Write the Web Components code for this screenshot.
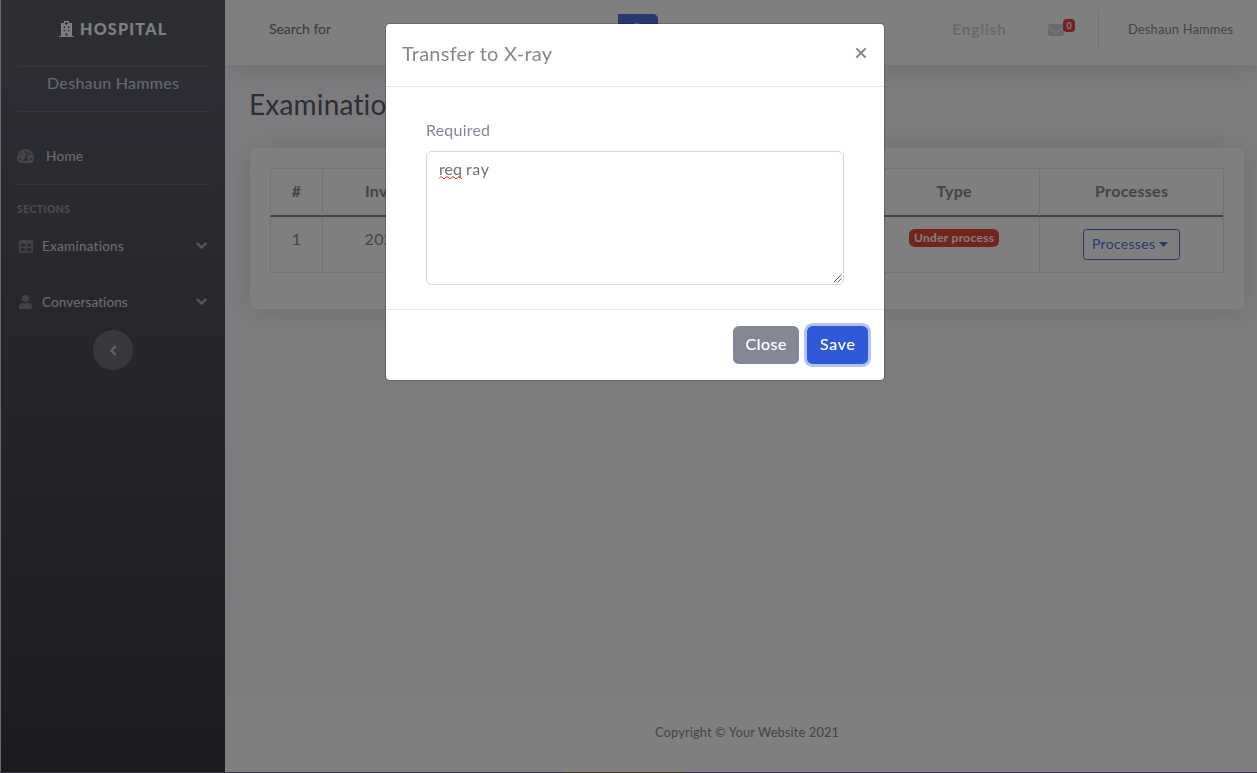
<!DOCTYPE html>
<html lang="en">
<head>
<meta charset="utf-8">
<title>Hospital - Examinations</title>
<style>
  html, body { margin: 0; height: 100%; overflow: hidden; }
  body { font-family: Lato, "Liberation Sans", sans-serif; font-size: 16px; line-height: 24px; color: #858796; background: #f8f9fc; }
</style>
</head>
<body>
<app-shell>
  <side-bar slot="side"></side-bar>
  <top-bar></top-bar>
  <exam-page></exam-page>
  <page-footer></page-footer>
</app-shell>
<modal-backdrop>
  <transfer-modal heading="Transfer to X-ray"></transfer-modal>
</modal-backdrop>
<script>
const ICONS = {
  hospital: ['0 0 15 16', '<path fill-rule="evenodd" d="M5 0h5v2h3v13h2v1H0v-1h2V2h3zM7 1v1H6v1h1v1h1V3h1V2H8V1zM4.500 5.500v1.500h1.700V5.500zM8.800 5.500v1.500h1.700V5.500zM4.500 8.700v1.500h1.700V8.700zM8.800 8.700v1.500h1.700V8.700zM6.700 12v3h1.600v-3z"/>'],
  gauge: ['0 32 576 448', '<path d="M288 32C128.940 32 0 160.940 0 320c0 52.800 14.250 102.260 39.060 144.800 5.610 9.620 16.300 15.200 27.440 15.200h443c11.140 0 21.830-5.580 27.440-15.200C561.750 422.260 576 372.800 576 320c0-159.060-128.940-288-288-288zm0 64c14.710 0 26.580 10.130 30.320 23.650-1.110 2.260-2.640 4.230-3.450 6.670l-9.220 27.670c-5.130 3.490-10.970 6.010-17.640 6.010-17.670 0-32-14.330-32-32S270.330 96 288 96zM96 384c-17.670 0-32-14.330-32-32s14.330-32 32-32 32 14.330 32 32-14.330 32-32 32zm48-160c-17.670 0-32-14.330-32-32s14.330-32 32-32 32 14.330 32 32-14.330 32-32 32zm246.770-72.410l-61.330 184C343.130 347.330 352 364.540 352 384c0 11.720-3.380 22.550-8.880 32H232.880c-5.500-9.450-8.880-20.280-8.880-32 0-33.940 26.500-61.430 59.900-63.590l61.340-184.010c4.170-12.560 17.730-19.450 30.360-15.170 12.570 4.190 19.350 17.790 15.170 30.360zm14.660 57.200l15.520-46.550c3.470-1.290 7.130-2.230 11.050-2.230 17.670 0 32 14.330 32 32s-14.330 32-32 32c-11.380-.010-20.890-6.280-26.570-15.220zM480 384c-17.670 0-32-14.330-32-32s14.330-32 32-32 32 14.330 32 32-14.330 32-32 32z"/>'],
  table: ['0 32 512 448', '<path d="M464 32H48C21.490 32 0 53.490 0 80v352c0 26.510 21.490 48 48 48h416c26.510 0 48-21.490 48-48V80c0-26.510-21.490-48-48-48zM224 416H64v-96h160v96zm0-160H64v-96h160v96zm224 160H288v-96h160v96zm0-160H288v-96h160v96z"/>'],
  user: ['0 0 448 512', '<path d="M224 256c70.700 0 128-57.300 128-128S294.700 0 224 0 96 57.300 96 128s57.300 128 128 128zm89.600 32h-16.700c-22.200 10.200-46.900 16-72.900 16s-50.600-5.800-72.900-16h-16.700C60.200 288 0 348.200 0 422.400V464c0 26.500 21.500 48 48 48h352c26.500 0 48-21.500 48-48v-41.600c0-74.200-60.200-134.400-134.400-134.400z"/>'],
  envelope: ['0 64 512 384', '<path d="M502.300 190.800c3.900-3.100 9.700-.2 9.700 4.700V400c0 26.500-21.500 48-48 48H48c-26.500 0-48-21.500-48-48V195.600c0-5 5.700-7.800 9.700-4.700 22.400 17.400 52.100 39.500 154.100 113.600 21.100 15.400 56.700 47.800 92.200 47.600 35.700.3 72-32.800 92.300-47.600 102-74.100 131.600-96.300 154-113.700zM256 320c23.200.4 56.600-29.200 73.400-41.400 132.700-96.300 142.800-104.700 173.400-128.700 5.800-4.500 9.200-11.500 9.200-18.900v-19c0-26.500-21.500-48-48-48H48c-26.500 0-48 21.500-48 48v19c0 7.400 3.400 14.300 9.200 18.900 30.600 23.900 40.700 32.400 173.400 128.700 16.800 12.200 50.200 41.800 73.400 41.400z"/>'],
  down: ['0 0 11 8', '<path d="M1.500 1.700 5.500 5.700 9.500 1.700" fill="none" stroke="currentColor" stroke-width="2.500" stroke-linecap="round" stroke-linejoin="round"/>'],
  left: ['0 0 8 11', '<path d="M6 1.700 2.200 5.500 6 9.300" fill="none" stroke="currentColor" stroke-width="2.300" stroke-linecap="round" stroke-linejoin="round"/>'],
  search: ['0 0 14 14', '<circle cx="5.700" cy="5.700" r="4.600" fill="none" stroke="currentColor" stroke-width="2"/><path d="M9.300 9.300 13 13" stroke="currentColor" stroke-width="2.300" stroke-linecap="round"/>'],
  caret: ['0 0 9 5', '<path d="M0 0h9L4.500 5z"/>'],
  close: ['0 0 12 12', '<path d="M1.300 1.300 10.700 10.700M10.700 1.300 1.300 10.700" stroke="currentColor" stroke-width="1.900"/>']
};

function define(name, html, setup) {
  const template = document.createElement('template');
  template.innerHTML = html;
  customElements.define(name, class extends HTMLElement {
    constructor() {
      super();
      this.attachShadow({ mode: 'open' }).append(template.content.cloneNode(true));
    }
    connectedCallback() { if (setup) setup(this, this.shadowRoot); }
  });
}

define('app-shell', `
<style>
  :host { display: grid; grid-template-columns: 225px 1fr; height: 773px; }
  main { display: flex; flex-direction: column; min-width: 0; overflow: hidden; }
</style>
<slot name="side"></slot><main><slot></slot></main>`);

define('side-bar', `
<style>
  :host { display: flex; flex-direction: column; box-sizing: border-box; border-left: 1px solid #d2d3d8; padding: 17px 16px 0; background: linear-gradient(180deg, #5a5c69 10%, #373840 100%); background-origin: border-box; position: relative; }
  .brand { display: flex; justify-content: center; align-items: center; gap: 6px; height: 24px; margin-right: 1px; color: #fff; font-weight: 900; }
  hr { width: 100%; height: 1px; border: 0; background: rgba(255,255,255,.13); margin: 25px 0 0; flex: none; }
  .name { margin: 4px 0 0; text-align: center; color: #d1d3e2; }
  .section { margin-top: 18px; font-size: 10.4px; font-weight: 900; line-height: 12px; color: rgba(255,255,255,.4); }
  button { margin: 18px auto 0; width: 40px; height: 40px; border: 0; border-radius: 50%; background: rgba(255,255,255,.2); color: rgba(255,255,255,.6); display: grid; place-items: center; padding: 0 1px 0 0; }
</style>
<div class="brand"><ui-icon name="hospital" w="15" h="16"></ui-icon><fit-text w="86">HOSPITAL</fit-text></div>
<hr>
<div class="name"><fit-text w="132">Deshaun Hammes</fit-text></div>
<hr style="margin-top:16px">
<nav-item icon="gauge" iw="17" ih="14" gap="12" style="margin-top:34px"><fit-text w="37">Home</fit-text></nav-item>
<hr style="margin-top:18px">
<div class="section"><fit-text w="53">SECTIONS</fit-text></div>
<nav-item icon="table" iw="14" ih="13" gap="8" arrow style="margin-top:21px"><fit-text w="82">Examinations</fit-text></nav-item>
<nav-item icon="user" iw="13" ih="14" gap="8" arrow style="margin-top:36px"><fit-text w="86">Conversations</fit-text></nav-item>
<button><ui-icon name="left" w="8" h="11"></ui-icon></button>`);

define('nav-item', `
<style>
  :host { display: flex; align-items: center; height: 20px; font-size: 13.6px; line-height: 20px; color: rgba(255,255,255,.8); }
  .lead { display: grid; place-items: center; width: 17px; color: rgba(255,255,255,.3); }
  .arrow { margin: 0 2px 0 auto; color: rgba(255,255,255,.5); }
  .arrow[hidden] { display: none; }
</style>
<span class="lead"></span><slot></slot><ui-icon class="arrow" name="down" w="11" h="8" hidden></ui-icon>`, (el, root) => {
  const lead = root.querySelector('.lead');
  lead.innerHTML = `<ui-icon name="${el.getAttribute('icon')}" w="${el.getAttribute('iw')}" h="${el.getAttribute('ih')}"></ui-icon>`;
  lead.style.marginRight = el.getAttribute('gap') + 'px';
  root.querySelector('.arrow').hidden = !el.hasAttribute('arrow');
});

define('top-bar', `
<style>
  :host { display: flex; align-items: center; height: 65px; padding: 0 24px 6px 32px; box-sizing: border-box; background: #fff; box-shadow: 0 2px 28px rgba(58,59,69,.15); flex: none; position: relative; z-index: 1; }
  .search { display: flex; align-items: center; width: 401px; height: 31px; font-size: 14px; color: #6e707e; background: #fefefe; box-sizing: border-box; padding-left: 12px; }
  .search fit-text { margin-bottom: 2px; }
  .search button { margin-left: auto; width: 40px; height: 31px; border: 0; border-radius: 0 5px 5px 0; background: #4e73df; color: #fff; display: grid; place-items: center; }
  .lang { margin-left: auto; margin-bottom: 2px; font-weight: 700; color: #d1d3e2; }
  .mail { position: relative; margin-left: 42px; width: 16px; height: 12px; color: #d1d3e2; }
  .count { position: absolute; left: 15px; top: -5px; width: 12px; height: 13px; border-radius: 4px; background: #e74a3b; color: #fff; font-size: 9px; font-weight: 700; line-height: 13px; text-align: center; }
  .rule { width: 1px; height: 36px; background: #e3e6f0; margin: 0 29px 0 34px; }
  .user { font-size: 12.8px; line-height: 20px; color: #858796; margin-bottom: 2px; }
</style>
<div class="search"><fit-text w="62">Search for</fit-text><button><ui-icon name="search" w="14" h="14"></ui-icon></button></div>
<div class="lang"><fit-text w="54">English</fit-text></div>
<div class="mail"><ui-icon name="envelope" w="16" h="12"></ui-icon><span class="count">0</span></div>
<div class="rule"></div>
<div class="user"><fit-text w="105">Deshaun Hammes</fit-text></div>`);

define('exam-page', `
<style>
  :host { display: block; flex: 1; padding: 22px 13px 0 25px; }
  h1 { margin: 0 0 0 -1px; font-size: 28px; line-height: 34px; font-weight: 400; color: #5a5c69; }
  .card { margin-top: 27px; height: 161px; box-sizing: border-box; padding: 20px 20px 0; background: #fff; border-radius: 6px; box-shadow: 0 2px 28px rgba(58,59,69,.15); }
  .grid { display: grid; grid-template-columns: 52px 174px 1fr 171px 184px; grid-template-rows: 49px 56px; box-sizing: border-box; height: 105px; border: 1px solid #e3e6f0; border-left: 0; border-top: 0; box-shadow: inset 0 1px #e3e6f0; }
  .grid > div { border-left: 1px solid #e3e6f0; text-align: center; box-sizing: border-box; padding-top: 11px; }
  .grid > .h { font-weight: 700; border-bottom: 2px solid #858689; }
  .grid > .n { padding-top: 10px; }
  .badge { display: inline-block; box-sizing: border-box; width: 90px; height: 18px; border-radius: 5.6px; background: #e74a3b; color: #fff; font-size: 12px; font-weight: 700; line-height: 18px; vertical-align: top; margin-top: 1px; }
  .btn { display: inline-flex; align-items: center; justify-content: center; gap: 4px; width: 97px; height: 31px; box-sizing: border-box; border: 1px solid #4e73df; border-radius: 3.2px; color: #4e73df; font-size: 14px; margin: 1px 0 0; padding: 0 3px 1px 0; }
</style>
<h1><fit-text w="166">Examinations</fit-text></h1>
<div class="card"><div class="grid">
  <div class="h">#</div><div class="h"><fit-text w="89">Invoice date</fit-text></div><div class="h"></div><div class="h"><fit-text w="35">Type</fit-text></div><div class="h"><fit-text w="73">Processes</fit-text></div>
  <div class="n">1</div><div class="n"><fit-text w="90">2021-07-03</fit-text></div><div></div><div><span class="badge"><fit-text w="80">Under process</fit-text></span></div><div><span class="btn"><fit-text w="63">Processes</fit-text><ui-icon name="caret" w="9" h="5"></ui-icon></span></div>
</div></div>`);

define('page-footer', `
<style>
  :host { display: flex; justify-content: center; height: 76px; padding: 25px 0 0 12px; box-sizing: border-box; background: #fff; font-size: 12.8px; line-height: 20px; flex: none; }
</style>
<fit-text w="184">Copyright © Your Website 2021</fit-text>`);

define('modal-backdrop', `
<style>
  :host { position: fixed; inset: 0; z-index: 10; background: rgba(0,0,0,.5); display: flex; align-items: flex-start; padding: 23px 0 0 385px; box-sizing: border-box; }
  .edge { position: absolute; left: 0; right: 0; bottom: 0; height: 1px; background: linear-gradient(90deg, #373451 560px, #4d3c25 563px, #4d3c25 685px, #3a2f55 688px); }
</style>
<slot></slot><div class="edge"></div>`);

define('transfer-modal', `
<style>
  :host { display: flex; flex-direction: column; width: 500px; height: 358px; box-sizing: border-box; background: #fff; background-clip: padding-box; border: 1px solid rgba(0,0,0,.2); border-radius: 4.800px; }
  header { display: flex; justify-content: space-between; align-items: flex-start; height: 63px; box-sizing: border-box; padding: 14px 17px 0 16px; border-bottom: 1px solid #e3e6f0; }
  h5 { margin: 0; font-size: 20px; font-weight: 400; line-height: 30px; }
  .x { color: #7f7f7f; margin-top: 9px; }
  section { height: 223px; box-sizing: border-box; padding: 31px 40px 0; border-bottom: 1px solid #e3e6f0; }
  label { display: block; line-height: 24px; }
  .area { position: relative; margin-top: 9px; width: 418px; height: 134px; box-sizing: border-box; border: 1px solid #d1d3e2; border-radius: 5.600px; padding: 5px 12px; color: #6e707e; }
  .row { display: flex; gap: 4px; }
  .wave { position: absolute; left: 12px; top: 23px; }
  .grip { position: absolute; right: 1px; bottom: 1px; color: #444; }
  footer { display: flex; justify-content: flex-end; gap: 8px; padding: 16px 16px 0 0; }
  button { height: 38px; border: 0; border-radius: 5.600px; padding: 0 0 2px; font: inherit; color: #fff; background: #858796; width: 66px; -webkit-text-stroke: .2px #fff; }
  .save { width: 61px; background: #2e59d9; box-shadow: 0 0 0 3px rgba(105,136,228,.5); }
</style>
<header><h5><fit-text w="150"></fit-text></h5><ui-icon class="x" name="close" w="12" h="12"></ui-icon></header>
<section><label><fit-text w="64">Required</fit-text></label>
<div class="area"><div class="row"><fit-text w="23">req</fit-text><fit-text w="23">ray</fit-text></div>
<svg class="wave" width="24" height="5" viewBox="0 0 24 5"><path d="M0 3.500 2 1.500 5 4 8 1.500 11 4 14 1.500 17 4 20 1.500 23 4" fill="none" stroke="#e02b2b" stroke-width="1"/></svg>
<svg class="grip" width="9" height="9" viewBox="0 0 9 9"><path d="M.5 8.500 8.500.5M4.500 8.500 8.500 4.500" stroke="currentColor" stroke-width=".8"/></svg></div></section>
<footer><button><fit-text w="41">Close</fit-text></button><button class="save"><fit-text w="35">Save</fit-text></button></footer>`, (el, root) => {
  root.querySelector('h5 fit-text').textContent = el.getAttribute('heading');
});

define('ui-icon', `<style>:host { display: block; flex: none; } :host([hidden]) { display: none; } svg { display: block; fill: currentColor; }</style><svg></svg>`, (el, root) => {
  const [box, body] = ICONS[el.getAttribute('name')];
  const svg = root.querySelector('svg');
  svg.setAttribute('viewBox', box);
  svg.setAttribute('width', el.getAttribute('w'));
  svg.setAttribute('height', el.getAttribute('h'));
  svg.setAttribute('preserveAspectRatio', 'none');
  svg.innerHTML = body;
});

// Tracks its text out to the width given in "w".
define('fit-text', `<style>:host { display: inline-block; white-space: nowrap; text-align: left; } span { display: inline-block; }</style><span><slot></slot></span>`, (el, root) => {
  const span = root.querySelector('span');
  const want = Number(el.getAttribute('w'));
  const count = el.textContent.length;
  const gap = (want - span.getBoundingClientRect().width) / Math.max(1, count - 1);
  span.style.letterSpacing = gap.toFixed(3) + 'px';
  el.style.width = want + 'px';
});
</script>
</body>
</html>
